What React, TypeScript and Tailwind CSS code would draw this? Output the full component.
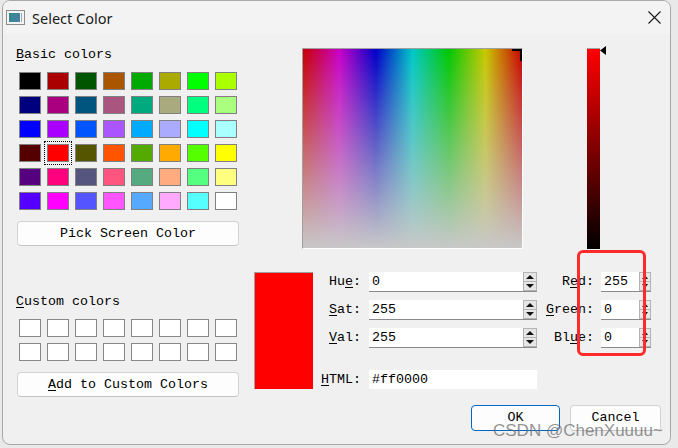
import React from "react";

const BASIC: string[][] = [
  ["#000000", "#aa0000", "#005500", "#aa5500", "#00aa00", "#aaaa00", "#00ff00", "#aaff00"],
  ["#00007f", "#aa007f", "#00557f", "#aa557f", "#00aa7f", "#aaaa7f", "#00ff7f", "#aaff7f"],
  ["#0000ff", "#aa00ff", "#0055ff", "#aa55ff", "#00aaff", "#aaaaff", "#00ffff", "#aaffff"],
  ["#550000", "#ff0000", "#555500", "#ff5500", "#55aa00", "#ffaa00", "#55ff00", "#ffff00"],
  ["#55007f", "#ff007f", "#55557f", "#ff557f", "#55aa7f", "#ffaa7f", "#55ff7f", "#ffff7f"],
  ["#5500ff", "#ff00ff", "#5555ff", "#ff55ff", "#55aaff", "#ffaaff", "#55ffff", "#ffffff"],
];

function U({ children }: { children: React.ReactNode }) {
  return <span className="underline underline-offset-[2px]">{children}</span>;
}

function Spin({ narrow }: { narrow?: boolean }) {
  const w = narrow ? 12 : 14;
  return (
    <div className={narrow ? "w-[12px] h-full flex flex-col" : "w-[14px] h-full flex flex-col"}>
      <div className="flex-1 border border-[#b4b4b4] bg-[#e6e6e6] flex items-center justify-center">
        <svg width={w - 4} height="6" viewBox={`0 0 ${w - 4} 6`}>
          <polygon points={`1,5 ${w - 5},5 ${(w - 4) / 2},1`} fill="#111" />
        </svg>
      </div>
      <div className="flex-1 border border-t-0 border-[#b4b4b4] bg-[#e6e6e6] flex items-center justify-center">
        <svg width={w - 4} height="6" viewBox={`0 0 ${w - 4} 6`}>
          <polygon points={`1,1 ${w - 5},1 ${(w - 4) / 2},5`} fill="#111" />
        </svg>
      </div>
    </div>
  );
}

function Input({ value, wide, spin }: { value: string; wide?: boolean; spin?: boolean }) {
  return (
    <div
      className={
        (wide ? "w-[168px]" : "w-[50px]") +
        " h-full bg-white border-b border-[#8a8a8a] flex items-stretch"
      }
    >
      <div className="flex-1 flex items-center pl-[3px]">{value}</div>
      {spin && <Spin narrow={!wide} />}
    </div>
  );
}

function Row({
  l1,
  v1,
  l2,
  v2,
}: {
  l1: React.ReactNode;
  v1: string;
  l2: React.ReactNode;
  v2: string;
}) {
  return (
    <div className="flex items-stretch h-[20px]">
      <div className="w-[48px] text-right flex items-center justify-end">{l1}</div>
      <div className="ml-[8px] h-full">
        <Input value={v1} wide spin />
      </div>
      <div className="w-[57px] text-right flex items-center justify-end">{l2}</div>
      <div className="ml-[7px] h-full">
        <Input value={v2} spin />
      </div>
    </div>
  );
}

function Swatch({ color, selected }: { color: string; selected?: boolean }) {
  return (
    <div
      className={
        "w-[22px] h-[18px] border border-[#808080]" +
        (selected ? " outline outline-1 outline-dotted outline-black outline-offset-[2px]" : "")
      }
      style={{ backgroundColor: color }}
    />
  );
}

export default function App() {
  return (
    <div className="relative w-[678px] h-[448px] bg-[#e9e9e9] overflow-hidden font-['Liberation_Mono',monospace] text-[13.33px] leading-[16px] text-black">
      <div className="ml-[2px] w-[669px] h-[445px] border border-[#a8a8a8] rounded-[8px] bg-[#f0f0f0] overflow-hidden flex flex-col">
        {/* Title bar */}
        <div className="h-[33px] bg-[#f3f3f3] flex items-center shrink-0">
          <div className="ml-[3px] w-[19px] h-[15px] border border-[#8c8c8c] bg-[#f4f4f4] flex p-[2px] gap-[1px]">
            <div className="w-[11px] h-full bg-[linear-gradient(135deg,#2d8a8a,#4f7fa8)]" />
            <div className="w-[1px] h-full bg-[#9aa]" />
          </div>
          <div className="ml-[7px] font-['Noto_Sans',sans-serif] text-[14.5px] leading-[20px] text-[#1b1b1b]">
            Select Color
          </div>
          <div className="ml-auto mr-[9px]">
            <svg width="13" height="13" viewBox="0 0 13 13">
              <path d="M0.5 0.5 L12.5 12.5 M12.5 0.5 L0.5 12.5" stroke="#1a1a1a" strokeWidth="1.1" />
            </svg>
          </div>
        </div>

        {/* Body */}
        <div className="flex pl-[13px] pr-[8px]">
          {/* Left column */}
          <div className="w-[224px] pt-[13px] flex flex-col">
            <div className="h-[16px]">
              <U>B</U>asic colors
            </div>
            <div className="mt-[9px] ml-[3px] grid grid-cols-[repeat(8,22px)] gap-[6px]">
              {BASIC.flatMap((row, r) =>
                row.map((c, i) => <Swatch key={r + "-" + i} color={c} selected={r === 3 && i === 1} />)
              )}
            </div>
            <div className="mt-[11px] ml-[1px] w-[222px] h-[25px] border border-[#d3d3d3] border-b-[#c4c4c4] rounded-[4px] bg-[#fdfdfd] flex items-center justify-center">
              Pick Screen Color
            </div>
            <div className="mt-[48px] h-[16px]">
              <U>C</U>ustom colors
            </div>
            <div className="mt-[9px] ml-[3px] grid grid-cols-[repeat(8,22px)] gap-[6px]">
              {Array.from({ length: 16 }).map((_, i) => (
                <div key={i} className="w-[22px] h-[18px] border border-[#888888] bg-white" />
              ))}
            </div>
            <div className="mt-[11px] ml-[1px] w-[222px] h-[25px] border border-[#d3d3d3] border-b-[#c4c4c4] rounded-[4px] bg-[#fdfdfd] flex items-center justify-center">
              <span>
                <U>A</U>dd to Custom Colors
              </span>
            </div>
          </div>

          {/* Right part */}
          <div className="ml-[14px] w-[407px] pt-[14px] flex flex-col">
            <div className="flex items-start">
              <div className="ml-[48px] relative w-[221px] h-[201px] border border-t-[#a0a0a0] border-l-[#a0a0a0] border-r-white border-b-white overflow-hidden bg-[linear-gradient(to_right,#c80000,#c800c8,#0000c8,#00c8c8,#00c800,#c8c800,#c80000)]">
                <div className="absolute inset-0 bg-[linear-gradient(to_bottom,rgba(200,200,200,0),rgb(200,200,200))]" />
                <div className="absolute right-[-1px] top-[0px] w-[11px] h-[2px] bg-black" />
                <div className="absolute right-[0px] top-[0px] w-[2px] h-[12px] bg-black" />
              </div>
              <div className="ml-[64px] relative w-[13px] h-[201px] border-t border-[#a0a0a0] bg-[linear-gradient(to_bottom,#ff0000,#000000)]">
                <svg className="absolute left-[13px] top-[-3px]" width="7" height="10" viewBox="0 0 7 10">
                  <polygon points="0,4.5 6,0 6,9" fill="#000" />
                </svg>
              </div>
            </div>

            <div className="flex mt-[23px]">
              <div className="w-[59px] h-[117px] bg-[#ff0000] border-l border-t border-[#a0a0a0]" />
              <div className="flex flex-col">
                <div className="flex flex-col gap-[8px]">
                  <Row
                    l1={
                      <span>
                        Hu<U>e</U>:
                      </span>
                    }
                    v1="0"
                    l2={
                      <span>
                        R<U>e</U>d:
                      </span>
                    }
                    v2="255"
                  />
                  <Row
                    l1={
                      <span>
                        <U>S</U>at:
                      </span>
                    }
                    v1="255"
                    l2={
                      <span>
                        <U>G</U>reen:
                      </span>
                    }
                    v2="0"
                  />
                  <Row
                    l1={
                      <span>
                        <U>V</U>al:
                      </span>
                    }
                    v1="255"
                    l2={
                      <span>
                        Bl<U>u</U>e:
                      </span>
                    }
                    v2="0"
                  />
                </div>
                <div className="mt-[22px] flex items-stretch h-[19px]">
                  <div className="w-[48px] flex items-center justify-end">
                    <span>
                      <U>H</U>TML:
                    </span>
                  </div>
                  <div className="ml-[8px] h-full">
                    <div className="w-[168px] h-full bg-white flex items-center pl-[3px]">#ff0000</div>
                  </div>
                </div>
              </div>
            </div>

            <div className="mt-[16px] flex justify-end gap-[10px]">
              <div className="w-[89px] h-[26px] border border-[#0067c0] rounded-[4px] bg-[#fdfdfd] flex items-center justify-center">
                OK
              </div>
              <div className="w-[91px] h-[26px] border border-[#d3d3d3] border-b-[#c4c4c4] rounded-[4px] bg-[#fdfdfd] flex items-center justify-center">
                Cancel
              </div>
            </div>
          </div>
        </div>
      </div>

      {/* Annotation */}
      <div className="absolute left-[577px] top-[250px] w-[69px] h-[106px] border-[3px] border-[#ff2b2b] rounded-[6px]" />

      {/* Watermark */}
      <div className="absolute left-[493px] top-[421px] font-['Liberation_Sans',sans-serif] text-[17px] leading-[20px] text-[rgba(105,105,105,0.72)]">
        CSDN @ChenXuuuu~
      </div>
    </div>
  );
}
